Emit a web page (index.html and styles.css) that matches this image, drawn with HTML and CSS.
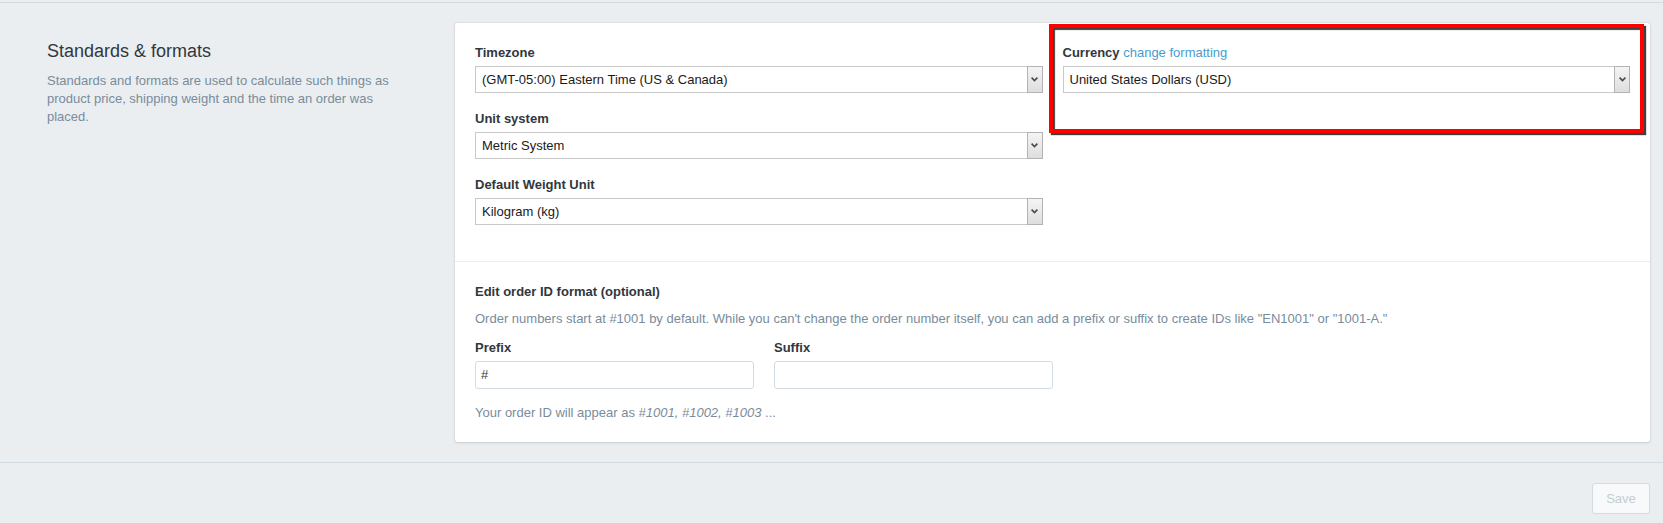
FILE: index.html
```html
<!DOCTYPE html>
<html lang="en">
<head>
<meta charset="utf-8">
<title>Standards &amp; formats</title>
<link rel="stylesheet" href="styles.css">
</head>
<body>
<div class="page">
  <div class="topbar"></div>
  <section class="settings">
    <div class="summary">
      <h2 class="summary-title">Standards &amp; formats</h2>
      <p class="summary-text">Standards and formats are used to calculate such things as product price, shipping weight and the time an order was placed.</p>
    </div>
    <div class="card">
      <div class="card-section grid2">
        <div class="col">
          <div class="field">
            <div class="label">Timezone</div>
            <div class="select"><span class="select-value">(GMT-05:00) Eastern Time (US &amp; Canada)</span><span class="select-btn"><svg width="7" height="5" viewBox="0 0 7 5"><path d="M0.6 0.6 L3.5 3.6 L6.4 0.6" fill="none" stroke="#4a4a4a" stroke-width="1.6"/></svg></span></div>
          </div>
          <div class="field">
            <div class="label">Unit system</div>
            <div class="select"><span class="select-value">Metric System</span><span class="select-btn"><svg width="7" height="5" viewBox="0 0 7 5"><path d="M0.6 0.6 L3.5 3.6 L6.4 0.6" fill="none" stroke="#4a4a4a" stroke-width="1.6"/></svg></span></div>
          </div>
          <div class="field">
            <div class="label">Default Weight Unit</div>
            <div class="select"><span class="select-value">Kilogram (kg)</span><span class="select-btn"><svg width="7" height="5" viewBox="0 0 7 5"><path d="M0.6 0.6 L3.5 3.6 L6.4 0.6" fill="none" stroke="#4a4a4a" stroke-width="1.6"/></svg></span></div>
          </div>
        </div>
        <div class="col col-currency">
          <div class="field">
            <div class="label">Currency <a class="link" href="#">change formatting</a></div>
            <div class="select"><span class="select-value">United States Dollars (USD)</span><span class="select-btn"><svg width="7" height="5" viewBox="0 0 7 5"><path d="M0.6 0.6 L3.5 3.6 L6.4 0.6" fill="none" stroke="#4a4a4a" stroke-width="1.6"/></svg></span></div>
          </div>
          <div class="annotation"></div>
        </div>
      </div>
      <div class="card-section">
        <div class="label">Edit order ID format (optional)</div>
        <p class="help help-top">Order numbers start at #1001 by default. While you can't change the order number itself, you can add a prefix or suffix to create IDs like "EN1001" or "1001-A."</p>
        <div class="affix-row">
          <div class="affix">
            <div class="label">Prefix</div>
            <div class="input">#</div>
          </div>
          <div class="affix">
            <div class="label">Suffix</div>
            <div class="input"></div>
          </div>
        </div>
        <p class="help help-bottom">Your order ID will appear as <em>#1001, #1002, #1003</em> ...</p>
      </div>
    </div>
  </section>
  <div class="footer">
    <button class="btn" type="button">Save</button>
  </div>
</div>
</body>
</html>
```

FILE: styles.css
```css
* { box-sizing: border-box; }

html, body {
  margin: 0;
  padding: 0;
  background: #ebeef0;
}

body {
  font-family: "Liberation Sans", Arial, sans-serif;
  font-size: 13px;
  color: #31373d;
}

.page {
  width: 1663px;
  height: 523px;
  overflow: hidden;
}

.topbar {
  height: 3px;
  border-bottom: 1px solid #d3dbe2;
}

.settings {
  display: flex;
  padding: 20px 13px 20px 47px;
}

.summary {
  flex: 0 0 408px;
  padding-top: 16px;
}

.summary-title {
  margin: 0;
  font-size: 18px;
  line-height: 24px;
  font-weight: normal;
  color: #31373d;
}

.summary-text {
  margin: 9px 0 0;
  width: 360px;
  font-size: 13px;
  line-height: 18px;
  color: #798c9c;
}

.card {
  flex: 1;
  background: #fff;
  border-radius: 3px;
  box-shadow: 0 0 0 1px rgba(63, 63, 68, 0.04), 0 1px 3px rgba(63, 63, 68, 0.15);
}

.card-section {
  padding: 20px;
}

.card-section + .card-section {
  border-top: 1px solid #ebeef0;
}

.grid2 {
  display: grid;
  grid-template-columns: 1fr 1fr;
  column-gap: 20px;
}

.col-currency {
  position: relative;
}

.field {
  margin-bottom: 16px;
}

.label {
  font-weight: bold;
  font-size: 13px;
  line-height: 19px;
  margin-bottom: 4px;
  color: #31373d;
}

.link {
  font-weight: normal;
  color: #479ccf;
  text-decoration: none;
}

.select {
  display: flex;
  height: 27px;
  border: 1px solid #c9c9c9;
  background: #fff;
}

.select-value {
  flex: 1;
  padding: 1px 0 0 6px;
  line-height: 24px;
  font-size: 13px;
  color: #1a1a1a;
  white-space: nowrap;
}

.select-btn {
  flex: 0 0 16px;
  display: flex;
  align-items: center;
  justify-content: center;
  margin: -1px -1px -1px 0;
  border: 1px solid #b3b3b3;
  background: linear-gradient(#f4f4f4, #dedede);
}

.annotation {
  position: absolute;
  left: -14px;
  top: -19px;
  width: 595px;
  height: 109px;
  border: 4px solid #ff0000;
  box-shadow: 2px 2px 1px rgba(0, 0, 0, 0.75), inset 2px 2px 1px rgba(0, 0, 0, 0.75);
  pointer-events: none;
}

.help {
  margin: 0;
  font-size: 13px;
  line-height: 19px;
  color: #798c9c;
}

.help-top {
  margin-top: 8px;
}

.help-bottom {
  margin-top: 14px;
}

.help em {
  font-style: italic;
}

.affix-row {
  display: grid;
  grid-template-columns: 279px 279px;
  column-gap: 20px;
  margin-top: 10px;
}

.input {
  height: 28px;
  border: 1px solid #d3dbe2;
  border-radius: 3px;
  padding: 0 5px;
  line-height: 26px;
  font-size: 13px;
  color: #31373d;
}

.footer {
  border-top: 1px solid #d3dbe2;
  padding: 20px 13px 0;
  display: flex;
  justify-content: flex-end;
}

.btn {
  width: 58px;
  height: 31px;
  border: 1px solid #d3dbe2;
  border-radius: 3px;
  background: #f7f9fa;
  color: #c4cdd5;
  font-family: "Liberation Sans", Arial, sans-serif;
  font-size: 13px;
  padding: 0;
}
```
